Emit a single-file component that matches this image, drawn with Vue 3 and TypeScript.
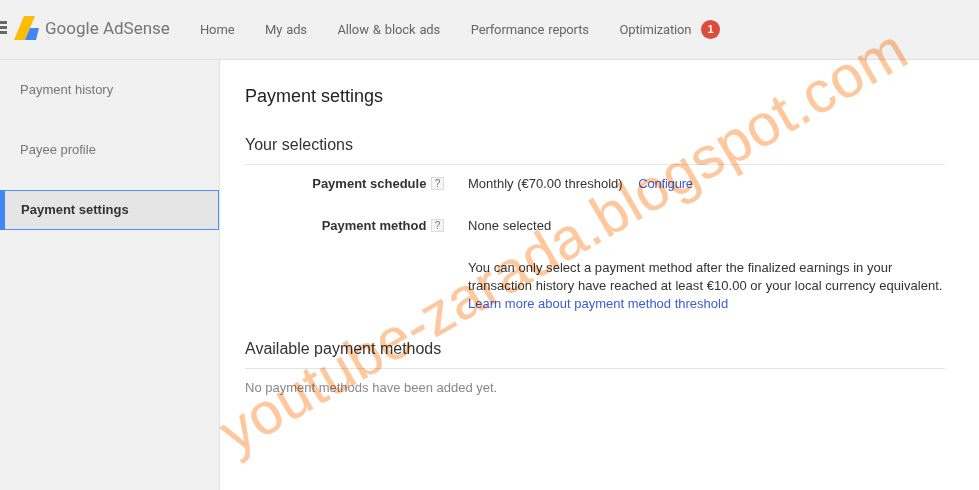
<template>
  <div class="page">
    <header class="topbar">
      <div class="menu-icon"><span></span><span></span><span></span></div>
      <svg class="logo" width="26" height="25" viewBox="0 0 26 25">
        <polygon points="10,0 21,0 11,24 0,24" fill="#fbbc05" />
        <polygon points="16,12 25,12 22,24 11,24" fill="#4285f4" />
      </svg>
      <div class="brand">Google AdSense</div>
      <nav class="nav">
        <a v-for="item in navItems" :key="item" class="nav-item">{{ item }}</a>
        <span class="badge">1</span>
      </nav>
    </header>
    <div class="body">
      <aside class="sidebar">
        <a
          v-for="item in sideItems"
          :key="item"
          class="side-item"
          :class="{ active: item === 'Payment settings' }"
        >{{ item }}</a>
      </aside>
      <main class="content">
        <h1>Payment settings</h1>
        <h2>Your selections</h2>
        <div class="row first">
          <div class="label">Payment schedule <span class="help">?</span></div>
          <div class="value">Monthly (€70.00 threshold) <a class="link configure">Configure</a></div>
        </div>
        <div class="row second">
          <div class="label">Payment method <span class="help">?</span></div>
          <div class="value">None selected</div>
        </div>
        <div class="row third">
          <div class="label"></div>
          <div class="value notice">
            You can only select a payment method after the finalized earnings in your<br />
            transaction history have reached at least €10.00 or your local currency equivalent.<br />
            <a class="link">Learn more about payment method threshold</a>
          </div>
        </div>
        <h2 class="available">Available payment methods</h2>
        <p class="empty">No payment methods have been added yet.</p>
      </main>
    </div>
    <div class="watermark">youtube-zarada.blogspot.com</div>
  </div>
</template>

<script setup lang="ts">
const navItems: string[] = ["Home", "My ads", "Allow & block ads", "Performance reports", "Optimization"];
const sideItems: string[] = ["Payment history", "Payee profile", "Payment settings"];
</script>

<style>
html,
body {
  margin: 0;
  background: #fff;
  overflow: hidden;
}
</style>

<style scoped>
.page {
  position: relative;
  width: 979px;
  height: 490px;
  overflow: hidden;
  font-family: "Liberation Sans", Arial, sans-serif;
  font-size: 13px;
  color: #333;
  display: flex;
  flex-direction: column;
}
.topbar {
  height: 59px;
  flex: none;
  display: flex;
  align-items: center;
  background: #f1f1f1;
  border-bottom: 1px solid #e1e1e1;
}
.menu-icon {
  width: 7px;
  height: 13px;
  margin-top: -5px;
  display: flex;
  flex-direction: column;
  justify-content: space-between;
}
.menu-icon span {
  display: block;
  height: 3px;
  background: #666;
}
.logo {
  margin-left: 7px;
  margin-top: -2px;
}
.brand {
  margin-left: 5px;
  margin-top: -3px;
  width: 126px;
  font-family: Roboto, sans-serif;
  font-size: 17px;
  color: #757575;
  white-space: nowrap;
}
.nav {
  display: flex;
  align-items: center;
  margin-left: 29px;
  gap: 30.6px;
  margin-top: -1px;
}
.nav-item {
  color: #666;
  font-size: 13px;
  letter-spacing: -0.15px;
  word-spacing: 1px;
  font-family: Roboto, sans-serif;
  white-space: nowrap;
}
.badge {
  width: 19px;
  height: 19px;
  margin-left: -21px;
  border-radius: 50%;
  background: #dd4b39;
  color: #fff;
  font-size: 11px;
  font-weight: bold;
  line-height: 19px;
  text-align: center;
}
.body {
  flex: 1;
  display: flex;
  min-height: 0;
}
.sidebar {
  width: 219px;
  flex: none;
  padding-top: 10px;
  background: #f1f1f1;
  border-right: 1px solid #e1e1e1;
  display: flex;
  flex-direction: column;
  gap: 20px;
}
.side-item {
  height: 40px;
  line-height: 40px;
  padding-left: 20px;
  color: #777;
  box-sizing: border-box;
}
.side-item.active {
  background: #e5e5e5;
  border: 1px solid #4d90fe;
  border-left: 5px solid #4285f4;
  padding-left: 16px;
  line-height: 38px;
  font-weight: bold;
  color: #333;
}
.content {
  flex: 1;
  padding: 0 34px 0 25px;
}
h1 {
  margin: 26px 0 0;
  font-size: 18px;
  line-height: 20px;
  font-weight: normal;
  color: #222;
}
h2 {
  margin: 0;
  font-size: 16px;
  font-weight: normal;
  line-height: 20px;
  color: #333;
  padding-bottom: 9px;
  border-bottom: 1px solid #e5e5e5;
}
h1 + h2 {
  margin-top: 29px;
}
.row {
  display: flex;
  line-height: 18px;
}
.row.first {
  margin-top: 10px;
}
.row.second,
.row.third {
  margin-top: 24px;
}
.label {
  width: 199px;
  flex: none;
  text-align: right;
  font-weight: bold;
}
.help {
  display: inline-block;
  width: 11px;
  height: 11px;
  margin-left: 1px;
  border: 1px solid #ddd;
  background: #f5f5f5;
  color: #777;
  font-size: 10px;
  line-height: 11px;
  font-weight: normal;
  text-align: center;
  vertical-align: 1px;
}
.value {
  margin-left: 24px;
  color: #333;
  white-space: nowrap;
}
.notice {
  letter-spacing: 0.04px;
}
.link {
  color: #3b5bdb;
  letter-spacing: 0;
}
.configure {
  margin-left: 12px;
  letter-spacing: -0.2px;
}
h2.available {
  margin-top: 26px;
}
.empty {
  margin: 10px 0 0;
  line-height: 18px;
  color: #888;
}
.watermark {
  position: absolute;
  left: 239px;
  top: 404px;
  transform-origin: left bottom;
  transform: rotate(-30.1deg);
  font-size: 58px;
  line-height: 1;
  white-space: nowrap;
  color: #fec89f;
  letter-spacing: 0.7px;
  -webkit-text-stroke: 0.3px #fec89f;
  mix-blend-mode: multiply;
  pointer-events: none;
}
</style>
